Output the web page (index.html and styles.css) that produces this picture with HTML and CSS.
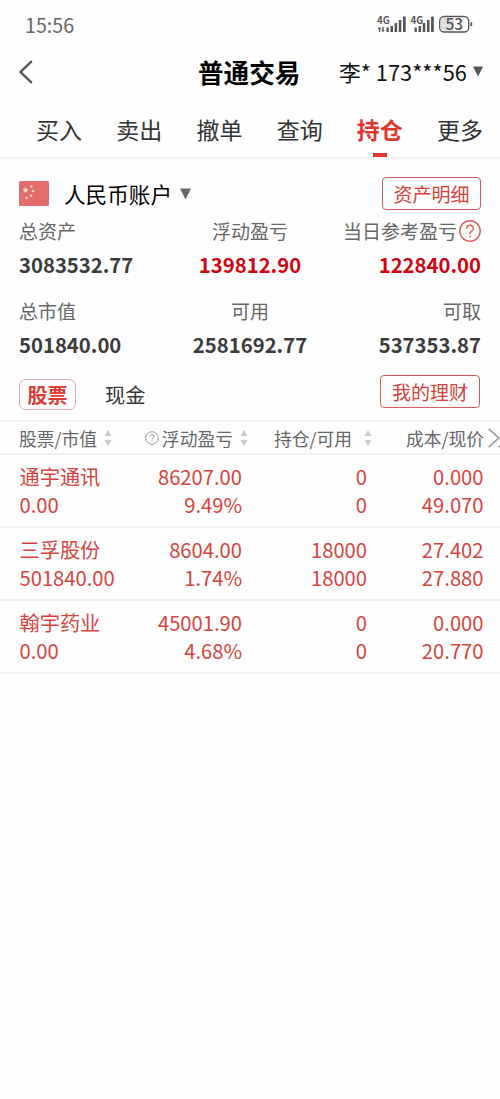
FILE: index.html
```html
<!DOCTYPE html>
<html lang="zh-CN">
<head>
<meta charset="utf-8">
<title>普通交易</title>
<link rel="stylesheet" href="styles.css">
</head>
<body>
<div class="status">
  <span class="clock">15:56</span>
  <svg class="status-icons" width="100" height="24" viewBox="0 0 100 24">
    <g fill="#555">
      <text class="net" x="0" y="11.500">4G</text>
      <path d="M3 15l1.500 2H3.500v3h-1v-3h-1zM6.500 20l-1.500-2h1v-3h1v3h1z" stroke="#555" stroke-width=".4" transform="translate(-.5 0)"/>
      <path d="M9.500 15.500h2.300v4.500h-2.300zM13.500 14h2.500v6h-2.500zM17.600 11h2.500v9h-2.500zM21.800 8h2.500v12h-2.500zM26 4.500h2.700v15.500h-2.700z"/>
      <text class="net" x="33.500" y="11.500">4G</text>
      <path d="M37.500 15.500h2.300v4.500h-2.300zM41.600 14h2.500v6h-2.500zM45.800 11h2.500v9h-2.500zM50 8h2.500v12h-2.500zM54.100 4.500h2.700v15.500h-2.700z"/>
    </g>
    <rect x="62.700" y="4.500" width="29" height="15.500" rx="4.500" fill="#fff" stroke="#555" stroke-width="1.300"/>
    <path d="M67 5.700h10v13.100H67a3 3 0 0 1-3-3V8.700a3 3 0 0 1 3-3z" fill="#dedede"/>
    <path d="M93.800 10.500h1v3.500h-1z" fill="#555" stroke="#555" stroke-width=".6"/>
    <text class="level" x="77.300" y="17.700" text-anchor="middle">53</text>
  </svg>
</div>
<header class="header">
  <svg class="back" width="16" height="24" viewBox="0 0 16 24"><path d="M13.800 1.200 2.500 12l11.300 10.800" fill="none" stroke="#555" stroke-width="2.400"/></svg>
  <h1 class="title">普通交易</h1>
  <span class="user">李* 173***56</span>
  <svg class="user-arrow" width="10" height="11" viewBox="0 0 10 11"><path d="M0 .5h10L5 10.500z" fill="#555"/></svg>
</header>
<nav class="tabs">
  <span class="tab">买入</span><span class="tab">卖出</span><span class="tab">撤单</span><span class="tab">查询</span><span class="tab active">持仓</span><span class="tab">更多</span>
</nav>
<section class="account">
  <svg class="flag" width="30" height="25" viewBox="0 0 30 25"><rect width="30" height="25" rx="1.500" fill="#e56c6c"/><path d="M6.500 6.500l.8 1.600 1.800.2-1.300 1.200.3 1.800-1.600-.8-1.600.8.3-1.800-1.300-1.200 1.800-.2z" fill="#fde0b8" stroke="#fde0b8" stroke-width=".5"/><g fill="#fbd6b4"><circle cx="12.300" cy="5.500" r="1.300"/><circle cx="14" cy="10" r="1.300"/><circle cx="12" cy="14.700" r="1.300"/><circle cx="7.500" cy="17" r="1.300"/></g></svg>
  <span class="account-name">人民币账户</span>
  <svg class="account-arrow" width="11" height="12" viewBox="0 0 11 12"><path d="M0 .5h11L5.500 11.500z" fill="#666"/></svg>
  <span class="button detail">资产明细</span>
</section>
<section class="summary">
  <div class="cell"><div class="label">总资产</div><div class="value">3083532.77</div></div>
  <div class="cell mid"><div class="label">浮动盈亏</div><div class="value gain">139812.90</div></div>
  <div class="cell end"><div class="label">当日参考盈亏<svg class="help" width="22" height="22" viewBox="0 0 22 22"><circle cx="11" cy="11" r="10.200"/><path d="M7.600 8.700c0-4.500 6.800-4.300 6.800-.3 0 2.500-3.400 2.800-3.400 5.300v.6M11 15.700v1.700"/></svg></div><div class="value gain">122840.00</div></div>
  <div class="cell"><div class="label">总市值</div><div class="value">501840.00</div></div>
  <div class="cell mid"><div class="label">可用</div><div class="value">2581692.77</div></div>
  <div class="cell end"><div class="label">可取</div><div class="value">537353.87</div></div>
</section>
<section class="switch">
  <span class="chip">股票</span>
  <span class="cash">现金</span>
  <span class="button wealth">我的理财</span>
</section>
<div class="row head">
  <div class="th first">股票/市值<svg class="sort" width="8" height="16" viewBox="0 0 8 16"><path d="M4 0l3.500 6h-7zM4 16l3.500-6h-7z"/></svg></div>
  <div class="th"><svg class="hint" width="14" height="14" viewBox="0 0 14 14"><circle cx="7" cy="7" r="6.300"/><path d="M5 5.600c0-2.700 4-2.600 4-.2 0 1.500-2 1.600-2 3.100M7 9.700v1.200"/></svg>浮动盈亏<svg class="sort" width="8" height="16" viewBox="0 0 8 16"><path d="M4 0l3.500 6h-7zM4 16l3.500-6h-7z"/></svg></div>
  <div class="th">持仓/可用<svg class="sort wide" width="8" height="16" viewBox="0 0 8 16"><path d="M4 0l3.500 6h-7zM4 16l3.500-6h-7z"/></svg></div>
  <div class="th last">成本/现价<svg class="more" width="12" height="20" viewBox="0 0 12 20"><path d="M.8.800 10.800 10 .8 19.200M10.500 19.200l1.500-1.500"/></svg></div>
</div>
<div class="row">
  <div class="td name">通宇通讯<br>0.00</div><div class="td">86207.00<br>9.49%</div><div class="td">0<br>0</div><div class="td">0.000<br>49.070</div>
</div>
<div class="row">
  <div class="td name">三孚股份<br>501840.00</div><div class="td">8604.00<br>1.74%</div><div class="td">18000<br>18000</div><div class="td">27.402<br>27.880</div>
</div>
<div class="row">
  <div class="td name">翰宇药业<br>0.00</div><div class="td">45001.90<br>4.68%</div><div class="td">0<br>0</div><div class="td">0.000<br>20.770</div>
</div>
</body>
</html>
```
FILE: styles.css
```css
* { box-sizing: border-box; }
body {
  margin: 0;
  width: 500px;
  min-height: 1099px;
  overflow-x: hidden;
  background: #fefefe;
  color: #333;
  font-family: "Noto Sans CJK SC", sans-serif;
  white-space: nowrap;
}
svg { flex: none; display: block; }

.status { display: flex; justify-content: space-between; height: 48px; padding: 12px 22px 0 25px; }
.clock { font-size: 19.7px; line-height: 26px; color: #666; }
.status-icons { margin-right: 1px; }
.net { font: 700 9.8px "Noto Sans CJK SC", sans-serif; }
.level { font: 500 15.5px "Noto Sans CJK SC", sans-serif; fill: #555; }

.header { display: flex; align-items: center; height: 47px; padding-left: 18px; }
.title { margin: 0 0 0 164px; width: 102px; font-size: 25.6px; line-height: 44px; font-weight: 700; color: #000; }
.user { margin-left: 39px; width: 129px; font-size: 21.8px; line-height: 44px; color: #111; }
.user-arrow { margin-left: 5px; }

.tabs { display: flex; height: 64px; padding-left: 19px; border-bottom: 2px solid #f2f2f2; }
.tab { display: flex; flex-direction: column; align-items: center; width: 80.2px; flex: none; font-size: 23px; line-height: 68px; height: 62px; }
.active { color: #e0382f; font-weight: 700; }
.active::after { content: ""; width: 14px; height: 4px; margin-top: -10px; background: #e0382f; }

.account { display: flex; align-items: center; height: 55px; padding: 14px 19px 0; }
.flag { margin-top: -1px; }
.account-name { margin-left: 15px; width: 108px; font-size: 21.6px; line-height: 30px; color: #000; }
.account-arrow { margin-left: 8px; }
.button { display: block; margin-left: auto; width: 99px; height: 33px; border: 1px solid #cf5c58; border-radius: 4px; text-align: center; font-size: 19px; line-height: 31px; color: #d5413c; }

.summary { display: grid; grid-template-columns: 1fr 1fr 1fr; grid-template-rows: 80px 80px; padding: 2px 19px 0; }
.label { display: flex; align-items: center; height: 30px; font-size: 19px; line-height: 30px; color: #666; }
.value { height: 38px; font-size: 20.3px; line-height: 37px; font-weight: 700; color: #3b3b3b; }
.mid .label { justify-content: center; }
.mid { text-align: center; }
.end .label { justify-content: flex-end; }
.end { text-align: right; }
.gain { color: #cf0410; }
.help { margin-left: 2px; fill: none; stroke: #e06058; stroke-width: 1.5; }

.switch { display: flex; height: 44px; padding: 0 20px 0 19px; }
.chip { width: 57px; height: 31px; margin-top: 3px; border: 1px solid #dfa9ad; border-radius: 7px; text-align: center; font-size: 20px; line-height: 29px; font-weight: 700; color: #db3c37; }
.cash { margin: 3px 0 0 29px; font-size: 20.3px; line-height: 30px; }
.wealth { margin-top: -1px; width: 100px; }

.row { display: grid; grid-template-columns: 118px 105px 125px 116.5px; height: 73px; padding: 8px 0 0 19px; border-bottom: 2px solid #f1f1f1; color: #d54440; }
.td { text-align: right; font-size: 20.2px; line-height: 28px; }
.name { text-align: left; padding-left: .5px; }
.head { height: 35px; padding-top: 0; border-top: 2px solid #f1f1f1; grid-template-columns: 93px 136px 124px 128px; }
.th { display: flex; align-items: center; justify-content: flex-end; font-size: 17.8px; line-height: 30px; color: #666; }
.sort { margin-left: 7px; fill: #ccc; }
.wide { margin-left: 12px; }
.hint { margin-right: 3px; fill: none; stroke: #999; stroke-width: 1; }
.more { margin-left: 4px; fill: none; stroke: #999; stroke-width: 1.6; }
```
